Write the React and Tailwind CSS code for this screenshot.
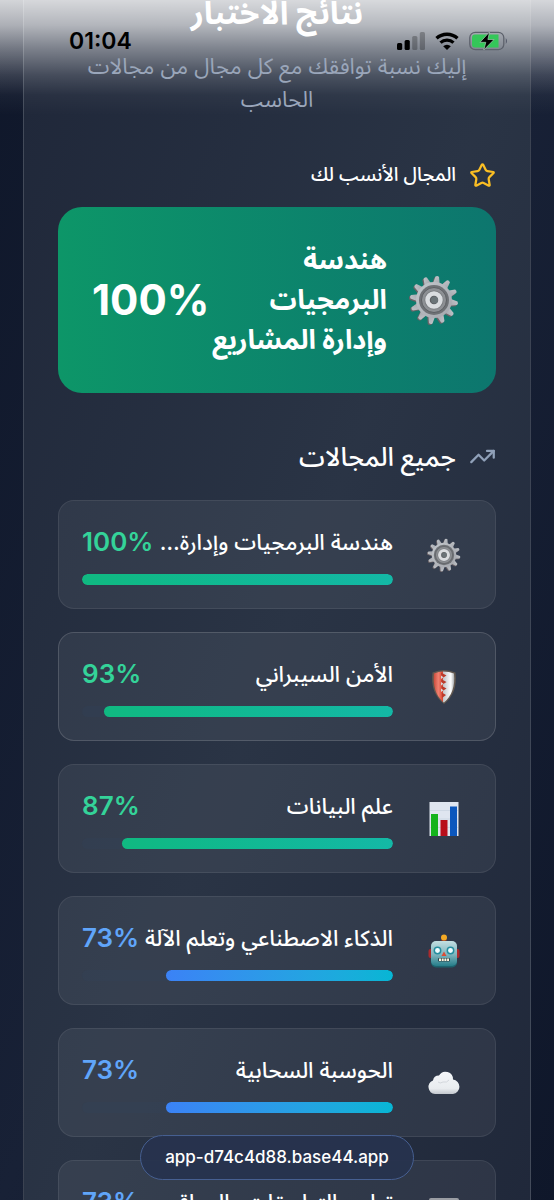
import React from 'react';
import { Star, TrendingUp } from 'lucide-react';

const teeth = [0, 30, 60, 90, 120, 150, 180, 210, 240, 270, 300, 330];

const GearIcon = ({ className }) => (
  <svg viewBox="0 0 50 50" className={className} aria-hidden="true">
    <defs>
      <linearGradient id="gearFace" x1="0" y1="0" x2="1" y2="1">
        <stop offset="0" stopColor="#c3c7cc" />
        <stop offset="1" stopColor="#a3a6ac" />
      </linearGradient>
    </defs>
    <g fill="#6b6367" transform="translate(-1 1)">
      {teeth.map((a) => (
        <path key={a} d="M21.5 9 L23 1.5 Q25 0 27 1.5 L28.5 9 Z" transform={`rotate(${a + 8} 25 25)`} />
      ))}
    </g>
    <g fill="url(#gearFace)">
      {teeth.map((a) => (
        <path key={a} d="M21.5 9 L23.2 1.5 Q25 0 26.8 1.5 L28.5 9 Z" transform={`rotate(${a + 8} 25 25)`} />
      ))}
    </g>
    <circle cx="25" cy="25" r="18" fill="url(#gearFace)" />
    <circle cx="25" cy="25" r="15" fill="#6f7276" />
    <circle cx="25" cy="25" r="12.5" fill="#8d9094" stroke="#5c5f63" strokeWidth="1" />
    <circle cx="25" cy="25" r="9.5" fill="#777a7e" />
    <circle cx="25" cy="25" r="6.5" fill="#5d6064" stroke="#dadde0" strokeWidth="4.5" />
    <circle cx="25.5" cy="25" r="3.5" fill="#6b7478" />
  </svg>
);

const ShieldIcon = ({ className }) => (
  <svg viewBox="0 0 34 34" className={className} aria-hidden="true">
    <defs>
      <linearGradient id="shieldRed" x1="0" y1="0" x2="1" y2="0">
        <stop offset="0" stopColor="#c94a3a" />
        <stop offset=".5" stopColor="#f08070" />
        <stop offset="1" stopColor="#d9452f" />
      </linearGradient>
      <linearGradient id="shieldWhite" x1="0" y1="0" x2="1" y2="0">
        <stop offset="0" stopColor="#bfc3c6" />
        <stop offset=".7" stopColor="#ffffff" />
        <stop offset="1" stopColor="#a5a8ab" />
      </linearGradient>
    </defs>
    <path d="M17 0 Q23 0 28.5 2.5 Q31 23 17 34 Q3 23 5.500 2.500 Q11 0 17 0Z" fill="#62584f" />
    <path d="M16 1.500 Q22 1.500 27 3.500 Q29 22 17 32.500L16 32Z" fill="url(#shieldWhite)" />
    <path d="M16 1.500 Q12 1.500 7 3.500 Q5 22 16 32Z" fill="url(#shieldRed)" />
    <path d="M14 2.500 L19.500 5.500 L14 9 L19.500 12 L14 15.500 L19.500 18.500 L14 22 L19 25 L15 28Z" fill="#bd3b2a" />
    <path d="M14 5.500 L16.500 7.300 L14 9Z M14 12 L16.500 13.800 L14 15.500Z M14 18.500 L16.500 20.300 L14 22Z" fill="#d9d9d9" />
  </svg>
);

const ChartIcon = ({ className }) => (
  <svg viewBox="0 0 34 34" className={className} aria-hidden="true">
    <rect x="2.500" y="0" width="29" height="34" fill="#dfe5f0" />
    <path d="M3 8.500H31M3 17H31M3 25.500H31" stroke="#c5cede" strokeWidth=".6" />
    <rect x="4" y="12" width="7" height="22" fill="#14b31d" />
    <rect x="13.500" y="18" width="7" height="16" fill="#b80d1a" />
    <rect x="23" y="4.500" width="7" height="29.500" fill="#0c57bd" />
  </svg>
);

const RobotIcon = ({ className }) => (
  <svg viewBox="0 0 34 34" className={className} aria-hidden="true">
    <defs>
      <linearGradient id="robotFace" x1="0" y1="0" x2="0" y2="1">
        <stop offset="0" stopColor="#c3dfe2" />
        <stop offset=".55" stopColor="#7db4bd" />
        <stop offset="1" stopColor="#257d89" />
      </linearGradient>
    </defs>
    <rect x="1.500" y="15" width="5" height="9" rx="2" fill="#a92a2d" />
    <rect x="27.500" y="15" width="5" height="9" rx="2" fill="#a92a2d" />
    <rect x="14.500" y="3.500" width="5" height="5" fill="#8e3a2b" />
    <circle cx="17" cy="3.500" r="3" fill="#f3aa25" />
    <rect x="4" y="7.500" width="26" height="26" rx="5" fill="#1d626d" />
    <rect x="4" y="7" width="26" height="25" rx="5" fill="url(#robotFace)" />
    <circle cx="10.500" cy="16.500" r="3.200" fill="#eefcff" stroke="#268e9f" strokeWidth="1.500" />
    <circle cx="23.500" cy="16.500" r="3.200" fill="#eefcff" stroke="#268e9f" strokeWidth="1.500" />
    <path d="M17 17.500 L19.500 22 H14.500Z" fill="#dc4c35" />
    <rect x="11" y="24" width="12" height="3.500" rx="1" fill="#29464b" />
    <path d="M12 25.700H22" stroke="#fff4df" strokeWidth="2.400" strokeDasharray="2 .7" />
  </svg>
);

const CloudIcon = ({ className }) => (
  <svg viewBox="0 0 34 34" className={className} aria-hidden="true">
    <defs>
      <linearGradient id="cloudFill" x1="0" y1="0" x2="0" y2="1">
        <stop offset="0" stopColor="#f4f6f9" />
        <stop offset=".75" stopColor="#e9ecef" />
        <stop offset="1" stopColor="#c3c8ce" />
      </linearGradient>
    </defs>
    <path d="M8 28 A7 7 0 0 1 6 14.500 A6 6 0 0 1 12 9.500 A7.500 7.500 0 0 1 26 13.500 A7.300 7.300 0 0 1 26 28Z" fill="url(#cloudFill)" />
    <path d="M11 16 Q13 18 16 16 Q20 17 22 14" fill="none" stroke="#d3d7dc" strokeWidth="1" />
  </svg>
);

const LaptopIcon = ({ className }) => (
  <svg viewBox="0 0 34 34" className={className} aria-hidden="true">
    <rect x="2" y="0" width="30" height="24" rx="2" fill="#9a9da3" />
    <rect x="4" y="2" width="26" height="20" fill="#3c6f9e" />
    <path d="M0 26H34L31 31H3Z" fill="#c3c6ca" />
  </svg>
);

const fields = [
  { name: 'هندسة البرمجيات وإدارة المشاريع', score: 100, Icon: GearIcon },
  { name: 'الأمن السيبراني', score: 93, Icon: ShieldIcon, active: true },
  { name: 'علم البيانات', score: 87, Icon: ChartIcon },
  { name: 'الذكاء الاصطناعي وتعلم الآلة', score: 73, Icon: RobotIcon },
  { name: 'الحوسبة السحابية', score: 73, Icon: CloudIcon },
  { name: 'تطوير التطبيقات والمواقع', score: 73, Icon: LaptopIcon },
];

const FieldCard = ({ name, score, Icon, active }) => {
  const high = score >= 80;

  return (
    <li
      className={`flex items-center gap-[22px] rounded-2xl border bg-white/6 px-[23px] py-[23px] ${
        active ? 'border-white/15' : 'border-white/8'
      }`}
    >
      <div className="flex w-[57px] shrink-0 justify-center">
        <Icon className="size-[34px]" />
      </div>
      <div className="min-w-0 flex-1">
        <div className="mb-[14px] flex h-9 items-center justify-between gap-1">
          <h3 className="truncate text-[22px] leading-9 font-medium text-white">{name}</h3>
          <span
            dir="ltr"
            className={`text-[26px] leading-9 font-semibold ${high ? 'text-[#34d399]' : 'text-[#60a5fa]'}`}
          >
            {score}%
          </span>
        </div>
        <div className="h-[11px] overflow-hidden rounded-full bg-slate-700/30">
          <div
            className={`h-full rounded-full bg-linear-to-r ${
              high ? 'from-[#10b981] to-[#14b8a6]' : 'from-[#3b82f6] to-[#06b6d4]'
            }`}
            style={{ width: `${score}%` }}
          />
        </div>
      </div>
    </li>
  );
};

// Phone status bar that floats over the scrolled page
const StatusBar = () => (
  <div
    dir="ltr"
    className="absolute inset-x-0 top-0 flex h-[60px] items-end justify-between pr-[46px] pb-[5px] pl-[69px] text-black"
  >
    <span className="text-[23px] leading-7 font-semibold">01:04</span>
    <div className="flex h-7 items-center gap-[10px]">
      <svg viewBox="0 0 28 18" className="h-[18px] w-7" aria-hidden="true">
        <rect x="0" y="11" width="5.200" height="7" rx="1.500" fill="#000" />
        <rect x="7.600" y="8" width="5.200" height="10" rx="1.500" fill="#000" />
        <rect x="15.200" y="4" width="5.200" height="14" rx="1.500" fill="#000" fillOpacity=".25" />
        <rect x="22.800" y="0" width="5.200" height="18" rx="1.500" fill="#000" fillOpacity=".25" />
      </svg>
      <svg viewBox="0 0 24 18" className="h-[18px] w-6" aria-hidden="true">
        <path d="M1.500 6.300 A15.500 15.500 0 0 1 22.500 6.300" fill="none" stroke="#000" strokeWidth="3.400" />
        <path d="M5.500 10.700 A9.500 9.500 0 0 1 18.500 10.700" fill="none" stroke="#000" strokeWidth="3.200" />
        <path d="M12 18 L8.200 14.200 A5.400 5.400 0 0 1 15.800 14.200Z" fill="#000" />
      </svg>
      <svg viewBox="0 0 39 20" className="h-5 w-[39px]" aria-hidden="true">
        <rect x=".8" y="1.300" width="34" height="17.400" rx="5.500" fill="none" stroke="#5d626c" strokeWidth="1.300" />
        <path d="M6 3.500H29.500V16.500H6A3 3 0 0 1 3 13.500V6.500A3 3 0 0 1 6 3.500Z" fill="#34c759" />
        <path d="M36.800 7 Q39 10 36.800 13Z" fill="#4a5060" />
        <path d="M20.500 1 L11 11.300H16.800L14.800 19L25 8.500H18.900Z" fill="#000" stroke="#a5c9b3" strokeWidth=".7" />
      </svg>
    </div>
  </div>
);

const App = () => {
  return (
    <div
      dir="rtl"
      className="relative h-screen overflow-hidden bg-linear-to-br from-[#0f172a] via-[#182136] to-[#0f172a] px-[23px] font-[Inter,'Noto_Sans_Arabic',sans-serif]"
    >
      <main className="-mt-[11px] border-x border-white/12 bg-linear-to-br from-[#1f2739] via-[#2a3445] to-[#1f2739] px-[34px]">
        <header className="relative z-10 text-center">
          <h1 className="text-[32px] leading-[48px] font-bold text-white">نتائج الاختبار</h1>
          <p className="mt-[13px] px-6 text-[22px] leading-[33px] text-[#9aa6ba]">
            إليك نسبة توافقك مع كل مجال من مجالات الحاسب
          </p>
        </header>

        <section>
          <h2 className="mt-[41px] mb-[14px] flex h-9 items-center gap-[13px] text-[19px] font-medium text-white">
            <Star className="size-[27px] text-[#fbbf24]" />
            المجال الأنسب لك
          </h2>
          <div className="flex items-center gap-[22px] rounded-3xl bg-linear-to-r from-[#0d9668] to-[#0d766e] px-[34px] py-[33px] text-white">
            <div className="flex w-[53px] shrink-0 justify-end">
              <GearIcon className="size-[50px]" />
            </div>
            <p className="min-w-0 flex-1 text-[27px] leading-10 font-bold">هندسة البرمجيات وإدارة المشاريع</p>
            <span dir="ltr" className="-mr-[22px] text-[42px] leading-none font-bold">100%</span>
          </div>
        </section>

        <section>
          <h2 className="mt-[45px] mb-[26px] flex h-9 items-center gap-[13px] text-[26px] font-medium text-white">
            <TrendingUp className="size-[27px] text-slate-400" />
            جميع المجالات
          </h2>
          <ul className="flex flex-col gap-[23px] pb-12">
            {fields.map((field) => (
              <FieldCard key={field.name} {...field} />
            ))}
          </ul>
        </section>
      </main>

      {/* light haze under the status bar */}
      <div className="absolute inset-x-0 top-0 h-[120px] bg-[linear-gradient(to_bottom,rgb(255_255_255/0.82)_0px,rgb(255_255_255/0.66)_25px,rgb(255_255_255/0.42)_48px,rgb(255_255_255/0.17)_75px,rgb(255_255_255/0.04)_95px,transparent_115px)]" />

      <StatusBar />

      <div className="absolute inset-x-0 bottom-5 flex justify-center">
        <a
          dir="ltr"
          href="#"
          className="flex h-[45px] items-center rounded-full border border-[#465f91] bg-[#27334e]/95 px-6 text-[17px] font-medium text-white"
        >
          app-d74c4d88.base44.app
        </a>
      </div>
    </div>
  );
};

export default App;
